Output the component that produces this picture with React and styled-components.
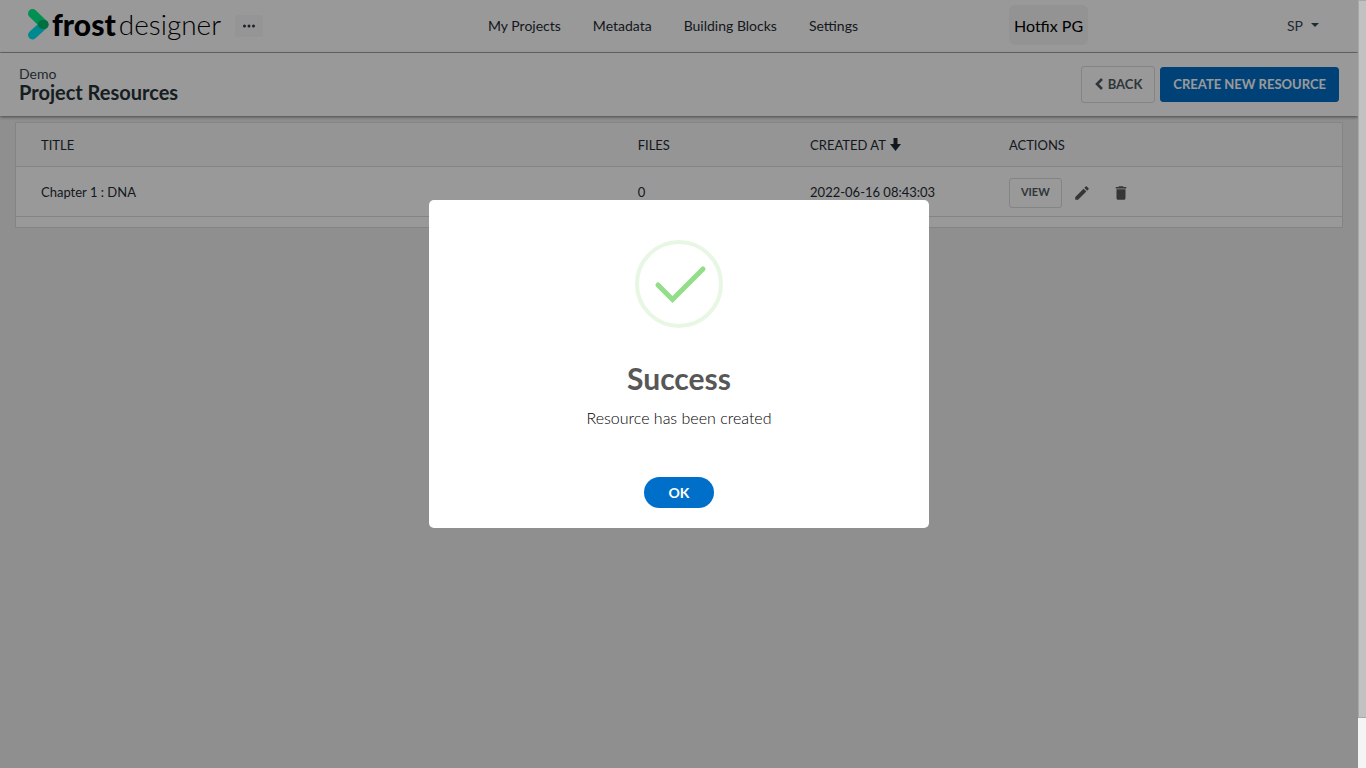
import React from 'react';
import styled, { createGlobalStyle } from 'styled-components';
import { MdEdit, MdDelete } from 'react-icons/md';

const GlobalStyle = createGlobalStyle`
  * {
    box-sizing: border-box;
  }

  body {
    margin: 0;
    background: #eee;
    color: #1f2b33;
    font-family: Lato, sans-serif;
    font-size: 14px;
    line-height: 20px;
  }

  button {
    font-family: inherit;
    cursor: pointer;
  }
`;

const Shell = styled.div`
  display: grid;
  grid-template-columns: 1fr 8px;
  height: 100vh;
`;

const Page = styled.div`
  position: relative;
  overflow: hidden;
`;

const ScrollTrack = styled.div`
  background: #f4f4f4;
`;

const ScrollThumb = styled.div`
  height: 718px;
  max-height: 94%;
  background: #c1c1c1;
  border: 1px solid #a8a8a8;
  border-width: 1px 0 1px 1px;
`;

const TopBar = styled.header`
  display: grid;
  grid-template-columns: 1fr auto 1fr;
  align-items: center;
  height: 52px;
  padding: 0 39px 0 27px;
  background: #fff;
  box-shadow: 0 1px 2px rgba(0, 0, 0, 0.4);
`;

const Brand = styled.div`
  display: flex;
  align-items: center;
`;

const Logo = styled.a`
  display: flex;
  align-items: center;
  padding-bottom: 4px;
  color: #000;
  font-size: 30px;
  line-height: 36px;
  text-decoration: none;
`;

const LogoStrong = styled.span`
  margin-left: 3px;
  font-weight: 900;
`;

const LogoLight = styled.span`
  margin-left: 3px;
  font-size: 28px;
  font-weight: 300;
`;

const MoreButton = styled.button`
  display: flex;
  align-items: center;
  justify-content: center;
  width: 28px;
  height: 22px;
  margin-left: 14px;
  padding: 0;
  border: 0;
  border-radius: 3px;
  background: #f8f8f8;
  color: #2c3a44;
`;

const Nav = styled.nav`
  display: flex;
`;

const NavLink = styled.a`
  padding: 0 16px;
  color: #1f2b33;
  text-decoration: none;
`;

const Account = styled.div`
  display: flex;
  align-items: center;
  justify-content: space-between;
  padding: 0 0 2px 135px;
`;

const GroupButton = styled.button`
  height: 40px;
  padding: 0 5px;
  border: 0;
  border-radius: 6px;
  background: #f5f5f5;
  color: #000;
  font-size: 16px;
`;

const UserButton = styled.button`
  display: flex;
  align-items: center;
  gap: 8px;
  padding: 0;
  border: 0;
  background: none;
  color: #37474f;
  font-size: 14px;
`;

const PageHeader = styled.div`
  display: flex;
  align-items: center;
  justify-content: space-between;
  height: 63px;
  margin-top: 1px;
  padding: 0 19px;
  background: #fff;
  box-shadow: 0 1px 3px rgba(0, 0, 0, 0.5);
`;

const Heading = styled.div`
  padding-bottom: 2px;
`;

const Project = styled.div`
  color: #37474f;
  line-height: 16px;
`;

const Title = styled.h1`
  margin: 0;
  color: #263238;
  font-size: 20px;
  font-weight: 700;
  line-height: 20px;
`;

const Toolbar = styled.div`
  display: flex;
  align-items: center;
  gap: 5px;
`;

const Button = styled.button`
  display: flex;
  align-items: center;
  gap: 4px;
  height: ${props => (props.$small ? '30px' : props.$primary ? '35px' : '37px')};
  padding: 0 ${props => (props.$small ? '11px' : '12px')} 2px;
  border: 1px solid ${props => (props.$primary ? '#006fc9' : '#dcdcdc')};
  border-radius: 3px;
  background: ${props => (props.$primary ? '#006fc9' : '#fff')};
  color: ${props => (props.$primary ? '#fff' : '#4f5b62')};
  font-size: ${props => (props.$small ? '11px' : '13px')};
  font-weight: 700;
  text-transform: uppercase;
`;

const Panel = styled.main`
  margin: 6px 15px;
  padding-bottom: 10px;
  border: 1px solid #dcdcdc;
  background: #fff;
`;

const Table = styled.table`
  width: 100%;
  border-spacing: 0;
  font-size: 13px;
  table-layout: fixed;
`;

const HeadCell = styled.th`
  width: ${props => props.$width};
  height: 44px;
  padding: 0 25px;
  border-bottom: 1px solid #dcdcdc;
  background: #f8f8f8;
  font-weight: 400;
  text-align: left;
  text-transform: uppercase;
`;

const Cell = styled.td`
  height: 50px;
  padding: 0 25px;
  border-bottom: 1px solid #dcdcdc;
`;

const Actions = styled.div`
  display: flex;
  align-items: center;
  padding-top: 2px;
`;

const IconButton = styled.button`
  display: flex;
  margin: 0 10px 0 11px;
  padding: 0;
  border: 0;
  background: none;
  color: #5b5b5b;
  font-size: 18px;
`;

const Overlay = styled.div`
  position: absolute;
  inset: 0;
  display: flex;
  align-items: center;
  justify-content: center;
  padding-bottom: 40px;
  background: rgba(0, 0, 0, 0.4);
`;

const Dialog = styled.div`
  display: flex;
  flex-direction: column;
  align-items: center;
  width: 500px;
  padding: 40px 20px 20px;
  border-radius: 5px;
  background: #fff;
`;

const DialogTitle = styled.h2`
  margin: 30px 0 0;
  color: #575757;
  font-size: 30px;
  font-weight: 700;
  line-height: 40px;
`;

const DialogText = styled.p`
  margin: 10px 0 0;
  color: #000;
  font-size: 16px;
  font-weight: 300;
  line-height: 20px;
`;

const ConfirmButton = styled.button`
  width: 70px;
  height: 31px;
  margin-top: 49px;
  padding: 0 0 1px;
  border: 0;
  border-radius: 16px;
  background: #006fc9;
  color: #fff;
  font-size: 14px;
  font-weight: 700;
`;

const LogoMark = () => (
  <svg width="22" height="32" viewBox="0 0 22 32" fill="none" strokeLinecap="round" strokeWidth="9">
    <path d="M5.500 27L17 16.500" stroke="#00e6f0" />
    <path d="M5.500 5.500L17 16.500" stroke="#00f08a" />
    <path d="M15.500 16.500h1.500" stroke="#00b86a" />
  </svg>
);

const Dots = () => (
  <svg width="14" height="4" viewBox="0 0 14 4" fill="currentColor">
    <circle cx="2.5" cy="2" r="1.5" />
    <circle cx="7" cy="2" r="1.5" />
    <circle cx="11.5" cy="2" r="1.5" />
  </svg>
);

const Caret = () => (
  <svg width="8" height="4" viewBox="0 0 8 4" fill="currentColor">
    <path d="M0 0h8L4 4z" />
  </svg>
);

const ChevronLeft = () => (
  <svg width="10" height="12" viewBox="0 0 10 12" fill="none" stroke="currentColor" strokeWidth="2.6">
    <path d="M8 1L3 6l5 5" />
  </svg>
);

const SortArrow = styled.svg`
  margin-left: 4px;
  vertical-align: -1px;
`;

const SuccessIcon = () => (
  <svg width="88" height="88" viewBox="0 0 88 88" fill="none">
    <circle cx="44" cy="44" r="42" stroke="#e8f7e4" strokeWidth="4" />
    <path d="M23 45l14.500 14.500L68 29" stroke="#93de88" strokeWidth="5" strokeLinecap="round" />
  </svg>
);

const links = ['My Projects', 'Metadata', 'Building Blocks', 'Settings'];

const resources = [
  { title: 'Chapter 1 : DNA', files: 0, createdAt: '2022-06-16 08:43:03' },
];

const App = () => {
  return (
    <Shell>
      <GlobalStyle />
      <Page>
        <TopBar>
          <Brand>
            <Logo href="#">
              <LogoMark />
              <LogoStrong>frost</LogoStrong>
              <LogoLight>designer</LogoLight>
            </Logo>
            <MoreButton aria-label="More">
              <Dots />
            </MoreButton>
          </Brand>
          <Nav>
            {links.map(link => (
              <NavLink href="#" key={link}>{link}</NavLink>
            ))}
          </Nav>
          <Account>
            <GroupButton>Hotfix PG</GroupButton>
            <UserButton>
              SP
              <Caret />
            </UserButton>
          </Account>
        </TopBar>

        <PageHeader>
          <Heading>
            <Project>Demo</Project>
            <Title>Project Resources</Title>
          </Heading>
          <Toolbar>
            <Button>
              <ChevronLeft />
              Back
            </Button>
            <Button $primary>Create new resource</Button>
          </Toolbar>
        </PageHeader>

        <Panel>
          <Table>
            <thead>
              <tr>
                <HeadCell $width="45%">Title</HeadCell>
                <HeadCell $width="13%">Files</HeadCell>
                <HeadCell $width="15%">
                  Created at
                  <SortArrow width="11" height="13" viewBox="0 0 11 13" fill="currentColor">
                    <path d="M3.500 0h4v6H11L5.500 13 0 6h3.500z" />
                  </SortArrow>
                </HeadCell>
                <HeadCell $width="27%">Actions</HeadCell>
              </tr>
            </thead>
            <tbody>
              {resources.map(item => (
                <tr key={item.title}>
                  <Cell>{item.title}</Cell>
                  <Cell>{item.files}</Cell>
                  <Cell>{item.createdAt}</Cell>
                  <Cell>
                    <Actions>
                      <Button $small>View</Button>
                      <IconButton aria-label="Edit"><MdEdit /></IconButton>
                      <IconButton aria-label="Delete"><MdDelete /></IconButton>
                    </Actions>
                  </Cell>
                </tr>
              ))}
            </tbody>
          </Table>
        </Panel>

        <Overlay>
          <Dialog role="dialog" aria-labelledby="dialog-title">
            <SuccessIcon />
            <DialogTitle id="dialog-title">Success</DialogTitle>
            <DialogText>Resource has been created</DialogText>
            <ConfirmButton>OK</ConfirmButton>
          </Dialog>
        </Overlay>
      </Page>
      <ScrollTrack>
        <ScrollThumb />
      </ScrollTrack>
    </Shell>
  );
};

export default App;
